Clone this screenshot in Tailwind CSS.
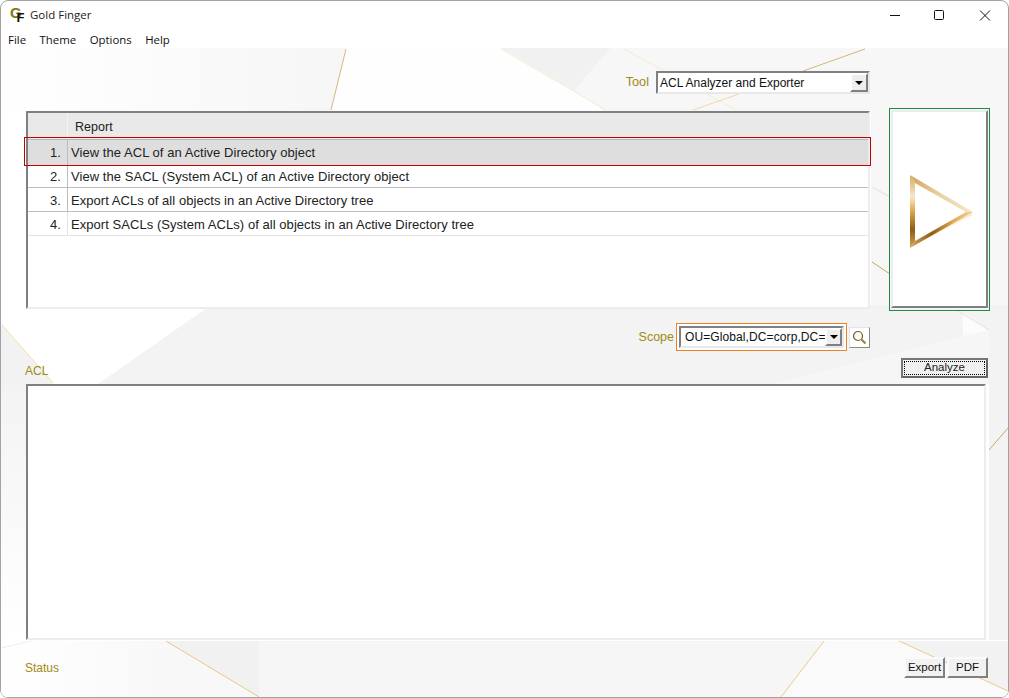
<!DOCTYPE html>
<html><head><meta charset="utf-8">
<script src="https://cdn.jsdelivr.net/npm/@tailwindcss/browser@4"></script>
<title>Gold Finger</title></head>
<body class="bg-white overflow-hidden">
<div class="w-[1009px] h-[698px] flex flex-col rounded-[8px] border border-[#a3a3a3] bg-white overflow-hidden font-['Liberation_Sans',sans-serif] text-[12px] text-[#111]">
  <div class="h-[28px] shrink-0 flex items-center pl-[9px]">
    <svg width="18" height="18" viewBox="0 0 18 18" class="shrink-0 overflow-visible"><text x="0" y="12" font-family="Liberation Sans" font-weight="700" font-size="15" fill="#7d7a10">G</text><text x="6.500" y="16" font-family="Liberation Sans" font-weight="700" font-size="13" fill="#111">F</text></svg>
    <span class="ml-[2px] font-['Open_Sans',sans-serif] text-[11.5px] text-[#222]">Gold Finger</span>
    <div class="ml-auto flex items-center">
      <svg width="46" height="28" viewBox="0 0 46 28"><path d="M20 14.500H30" stroke="#111" stroke-width="1"/></svg>
      <svg width="46" height="28" viewBox="0 0 46 28"><rect x="18.500" y="9.500" width="9" height="9" rx="1" fill="none" stroke="#111"/></svg>
      <svg width="46" height="28" viewBox="0 0 46 28"><path d="M18 9.500L28 19.500M28 9.500L18 19.500" stroke="#111" fill="none"/></svg>
    </div>
  </div>
  <div class="h-[19px] shrink-0 flex items-center pt-[3px] pl-[7px] gap-[13.500px] font-['Open_Sans',sans-serif] text-[11.4px] text-[#111]">
    <span>File</span><span>Theme</span><span>Options</span><span>Help</span>
  </div>
  <main class="relative flex-1 bg-[#f9f9f9] pl-[25px] flex flex-col">
    <svg class="absolute inset-0" width="1007" height="649" viewBox="0 48 1007 649">
      <defs>
        <linearGradient id="bg1" x1="0" y1="0" x2="1" y2="0"><stop offset="0" stop-color="#ffffff"/><stop offset="1" stop-color="#f6f6f6"/></linearGradient>
        <linearGradient id="bg2" x1="0" y1="0" x2="0" y2="1"><stop offset="0" stop-color="#f3f3f3"/><stop offset="1" stop-color="#ffffff"/></linearGradient>
        <linearGradient id="bg3" x1="0" y1="0" x2="1" y2="0"><stop offset="0" stop-color="#ffffff"/><stop offset="1" stop-color="#f8f8f8"/></linearGradient>
      </defs>
      <rect x="0" y="48" width="1007" height="649" fill="#ffffff"/>
      <rect x="0" y="48" width="345" height="64" fill="url(#bg1)"/>
      <polygon points="345,48 500,48 605,112 330,112" fill="#fefefe"/>
      <polygon points="500,48 610,48 573,91" fill="#f1f1f1"/>
      <polygon points="610,48 1007,48 1007,310 870,310 870,112 605,112 573,91" fill="#f7f7f7"/>
      <polygon points="0,325 52,384 0,384" fill="#f2f2f2"/>
      <rect x="0" y="384" width="26" height="256" fill="url(#bg2)"/>
      <polygon points="97,384 210,305 1007,305 1007,640 988,640 988,384" fill="#f3f3f3"/>
      <polygon points="962,313 988,330 962,336" fill="#fcfcfc"/>
      <polygon points="770,384 962,336 988,330 988,384" fill="#f6f6f6"/>
      <rect x="0" y="641" width="165" height="56" fill="url(#bg3)"/>
      <polygon points="165,641 258,641 258,697" fill="#f1f1f1"/>
      <polygon points="165,641 258,697 165,697" fill="#f8f8f8"/>
      <polygon points="258,641 823,641 780,697 258,697" fill="#f6f6f6"/>
      <polygon points="823,641 898,641 1007,691 1007,697 780,697" fill="#fafafa"/>
      <polygon points="898,641 1007,641 1007,691" fill="#f2f2f2"/>
      <path d="M345 49L330 110" stroke="#d8b880" stroke-width="1" fill="none"/>
      <path d="M500 49L605 110" stroke="#f5ecd0" stroke-width="1" fill="none"/>
      <path d="M623 49L735 110" stroke="#f5ecd0" stroke-width="1" fill="none"/>
      <path d="M864 49L802 71" stroke="#d4b780" stroke-width="1" fill="none"/>
      <path d="M692 110L738 94" stroke="#f0d9a8" stroke-width="1" fill="none"/>
      <path d="M871 187L889 197" stroke="#e8e0d0" stroke-width="1" fill="none"/>
      <path d="M871 262L889 274" stroke="#c9a868" stroke-width="1" fill="none"/>
      <path d="M955 310L988 330" stroke="#ebe3d4" stroke-width="1" fill="none"/>
      <path d="M988 450L1007 428" stroke="#c8a870" stroke-width="1" fill="none"/>
      <path d="M1 325L52 383" stroke="#f0d9a0" stroke-width="1" fill="none"/>
      <path d="M165 641L258 697" stroke="#ebc680" stroke-width="1" fill="none"/>
      <path d="M823 641L780 697" stroke="#eccb88" stroke-width="1" fill="none"/>
      <path d="M898 641L1007 691" stroke="#eccb88" stroke-width="1" fill="none"/>
      <path d="M0 648L30 641" stroke="#f2eee0" stroke-width="1" fill="none"/>
    </svg>
    <div class="relative flex items-start">
      <div class="w-[844px] flex flex-col">
        <div class="mt-[23px] h-[23px] flex items-center justify-end gap-[7px]">
          <span class="text-[#a08a10] text-[12.700px]">Tool</span>
          <div class="w-[214px] h-[23px] flex items-center justify-between bg-white border-2 border-t-[#808080] border-l-[#808080] border-r-[#e8e8e8] border-b-[#e8e8e8] pl-[2px]">
            <span class="text-[#111]">ACL Analyzer and Exporter</span>
            <div class="w-[18px] h-[19px] flex items-center justify-center bg-[#eeeeee] border-2 border-t-white border-l-white border-r-[#808080] border-b-[#808080]"><div class="w-0 h-0 border-x-[4px] border-x-transparent border-t-[4px] border-t-black"></div></div>
          </div>
        </div>
        <div class="mt-[17px] relative h-[198px] bg-white border-2 border-t-[#808080] border-l-[#808080] border-r-[#ececec] border-b-[#ececec] text-[13px] tracking-[0.05px] text-[#222]">
          <div class="h-[26px] flex bg-[#e9e9e9]">
            <div class="w-[40px] border-r border-[#f4f4f4]"></div>
            <div class="pl-[7px] pt-[2px] flex items-center text-[#222] text-[12.500px]">Report</div>
          </div>
          <div class="relative h-[26px] flex bg-[#dedede] border-t border-[#b9b9b9]">
            <div class="w-[40px] flex items-center justify-end pr-[6px] border-r border-[#bdbdbd]">1.</div>
            <div class="pl-[3px] flex items-center">View the ACL of an Active Directory object</div>
            <div class="absolute left-[-4px] right-[-3px] top-[-3px] bottom-[-1px] border border-[#c40000]"></div>
          </div>
          <div class="h-[23px] flex border-b border-[#bdbdbd]">
            <div class="w-[40px] flex items-center justify-end pr-[6px] pt-[1px] border-r border-[#bdbdbd]">2.</div>
            <div class="pl-[3px] pt-[1px] flex items-center">View the SACL (System ACL) of an Active Directory object</div>
          </div>
          <div class="h-[24px] flex border-b border-[#bdbdbd]">
            <div class="w-[40px] flex items-center justify-end pr-[6px] pt-[2px] border-r border-[#bdbdbd]">3.</div>
            <div class="pl-[3px] pt-[2px] flex items-center">Export ACLs of all objects in an Active Directory tree</div>
          </div>
          <div class="h-[24px] flex border-b border-[#e2e2e2]">
            <div class="w-[40px] flex items-center justify-end pr-[6px] pt-[2px] border-r border-[#e2e2e2]">4.</div>
            <div class="pl-[3px] pt-[2px] flex items-center">Export SACLs (System ACLs) of all objects in an Active Directory tree</div>
          </div>
        </div>
      </div>
      <div class="ml-[19px] mt-[60px] w-[101px] h-[203px] border border-[#1f8a45] p-[1px] pb-[2px]">
        <div class="w-full h-full bg-white border-2 border-t-[#ececec] border-l-[#ececec] border-r-[#808080] border-b-[#808080] flex items-center justify-center pl-[5px] pt-[5px]">
          <svg width="68" height="78" viewBox="908 173 68 78">
            <defs>
              <linearGradient id="gl" x1="0" y1="0" x2="0" y2="1"><stop offset="0" stop-color="#d9a95c"/><stop offset=".3" stop-color="#f6e8cc"/><stop offset=".45" stop-color="#e5b65f"/><stop offset=".75" stop-color="#8e5c12"/><stop offset="1" stop-color="#d6a85a"/></linearGradient>
              <linearGradient id="gb" x1="0" y1="0" x2="1" y2="0"><stop offset="0" stop-color="#d6a85a"/><stop offset=".35" stop-color="#8e5c12"/><stop offset=".7" stop-color="#e0ae55"/><stop offset="1" stop-color="#f0d49a"/></linearGradient>
              <linearGradient id="gt" x1="0" y1="0" x2="1" y2="0"><stop offset="0" stop-color="#d2a45c"/><stop offset=".5" stop-color="#ecd3a4"/><stop offset="1" stop-color="#f6e7ca"/></linearGradient>
            </defs>
            <polygon points="914,181 914,244 971,214.500 968,212" fill="none" stroke="#f6e4c0" stroke-width="2" opacity=".7"/>
            <polygon points="910,175 973,212 966,212 915,183" fill="url(#gt)"/>
            <polygon points="910,248 973,212 966,212 915,241" fill="url(#gb)"/>
            <polygon points="910,175 915,183 915,241 910,248" fill="url(#gl)"/>
          </svg>
        </div>
      </div>
    </div>
    <div class="relative w-[844px] mt-[12px] h-[28px] flex items-center justify-end">
      <span class="text-[#a08a10] mr-[2px] text-[12.500px]">Scope</span>
      <div class="w-[171px] h-[28px] border border-[#f08020] p-[2px] bg-white">
        <div class="h-full flex items-center justify-between border-2 border-t-[#808080] border-l-[#808080] border-r-[#e8e8e8] border-b-[#e8e8e8] pl-[4px] overflow-hidden">
          <span class="whitespace-nowrap overflow-hidden tracking-[0.1px]">OU=Global,DC=corp,DC=</span>
          <div class="w-[17px] h-[18px] shrink-0 flex items-center justify-center bg-[#eeeeee] border-2 border-t-white border-l-white border-r-[#808080] border-b-[#808080]"><div class="w-0 h-0 border-x-[4px] border-x-transparent border-t-[4px] border-t-black"></div></div>
        </div>
      </div>
      <div class="ml-[2px] w-[21px] h-[21px] flex items-center justify-center bg-white border border-t-[#e4e4e4] border-l-[#e4e4e4] border-r-[#8a8a8a] border-b-[#8a8a8a]">
        <svg width="15" height="15" viewBox="0 0 15 15"><circle cx="6" cy="6" r="4.500" fill="#fdfcf6" stroke="#6e5a2c" stroke-width="1.200"/><path d="M9.500 9.500L13.500 13.500" stroke="#a07c28" stroke-width="2"/></svg>
      </div>
    </div>
    <div class="relative flex items-center justify-between h-[20px] mt-[7px] pr-[20px]">
      <span class="text-[#a08a10] ml-[-1px] pt-[5px]">ACL</span>
      <div class="w-[87px] h-[20px] bg-[#f0f0f0] border-2 border-t-[#777] border-l-[#777] border-r-[#666] border-b-[#666] p-[1px]">
        <div class="h-full flex items-center justify-center border border-dotted border-black text-[#222] text-[11.500px]">Analyze</div>
      </div>
    </div>
    <div class="relative mt-[6px] h-[256px] w-[960px] bg-white border-2 border-t-[#808080] border-l-[#808080] border-r-[#ececec] border-b-[#ececec]"></div>
    <div class="relative flex items-center justify-between h-[21px] mt-[17px] pr-[20px]">
      <span class="text-[#a08a10] ml-[-1px] pt-[1px]">Status</span>
      <div class="flex gap-[2px] text-[11.500px]">
        <div class="w-[41px] h-[21px] flex items-center justify-center bg-[#f2f2f2] border-2 border-t-[#fafafa] border-l-[#fafafa] border-r-[#808080] border-b-[#808080]">Export</div>
        <div class="w-[41px] h-[21px] flex items-center justify-center bg-[#f2f2f2] border-2 border-t-[#fafafa] border-l-[#fafafa] border-r-[#808080] border-b-[#808080]">PDF</div>
      </div>
    </div>
  </main>
</div>
</body></html>
